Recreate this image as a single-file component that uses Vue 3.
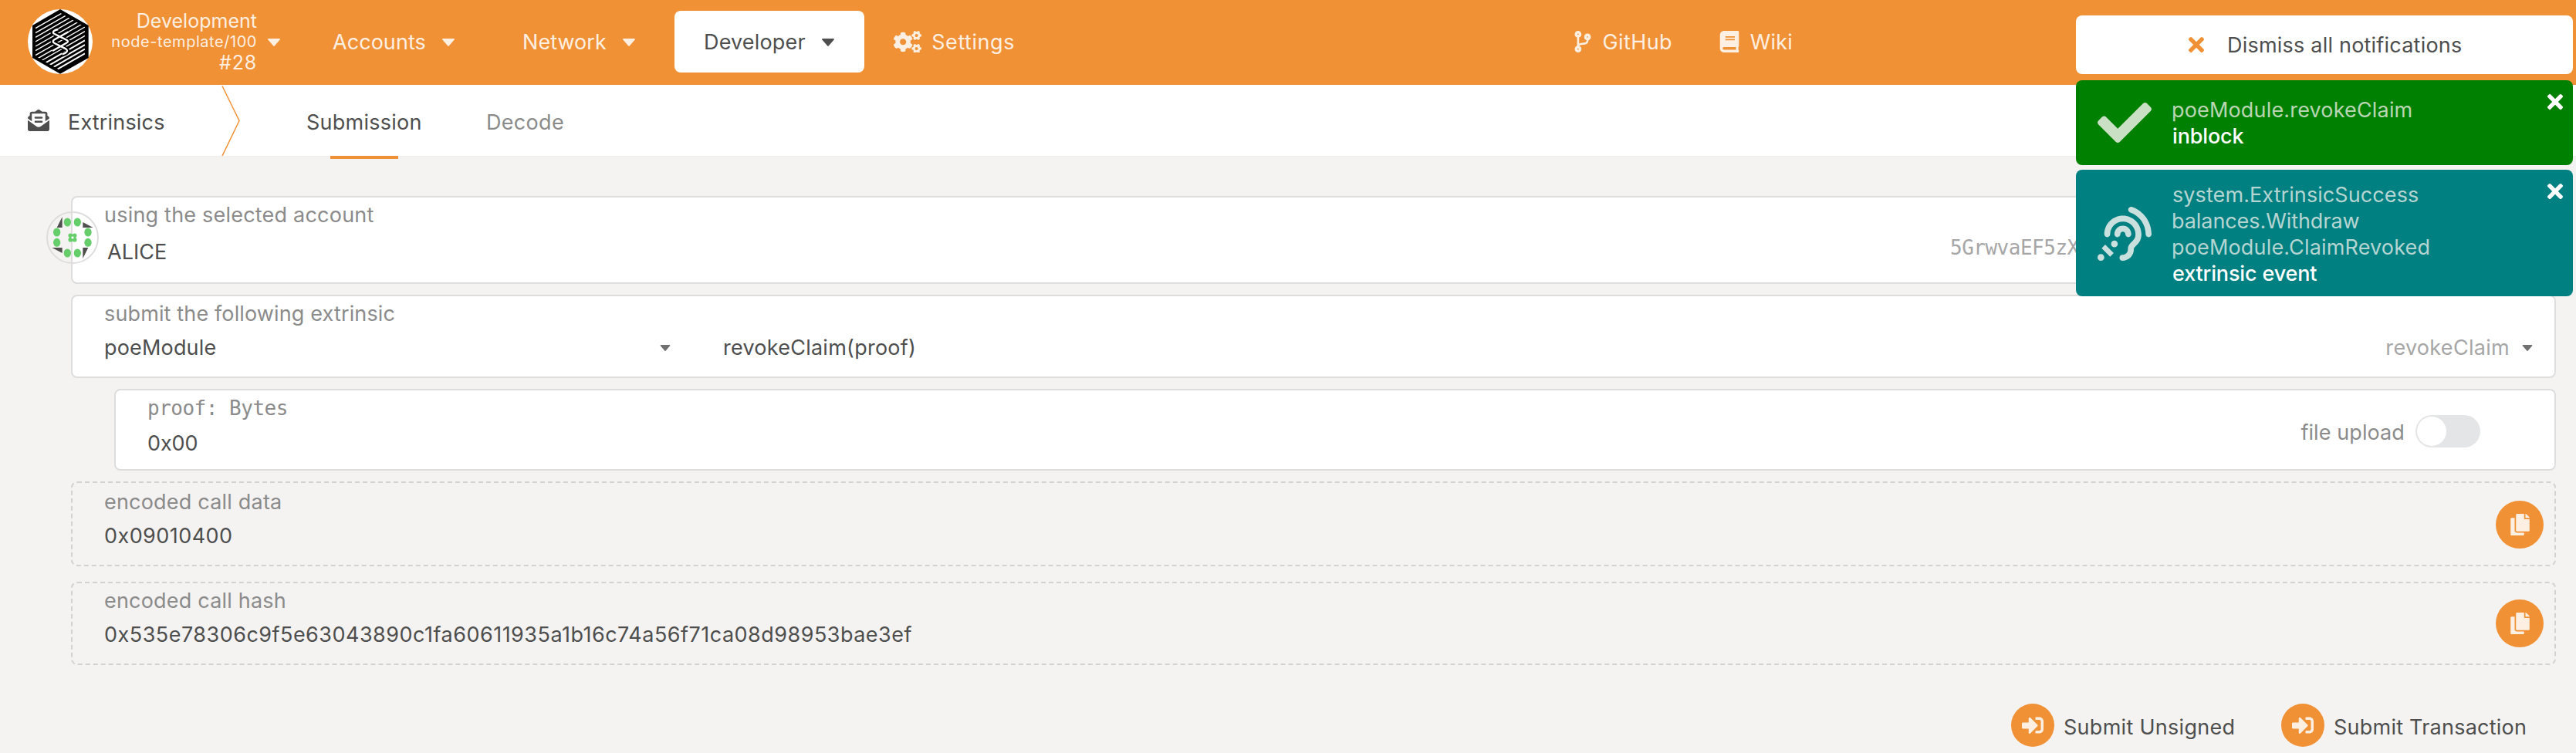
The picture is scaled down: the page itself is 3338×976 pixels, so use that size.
<script setup>
import { h } from 'vue'

const shapes = {
  cogs: ['0 0 640 512', 'M512.1 191l-8.2 14.3c-3 5.3-9.4 7.5-15.1 5.4-11.8-4.4-22.6-10.7-32.1-18.6-4.6-3.8-5.8-10.5-2.8-15.7l8.2-14.3c-6.9-8-12.3-17.3-15.9-27.4h-16.5c-6 0-11.2-4.3-12.2-10.3-2-12-2.1-24.6 0-37.1 1-6 6.2-10.4 12.2-10.4h16.5c3.6-10.1 9-19.4 15.9-27.4l-8.2-14.3c-3-5.2-1.9-11.9 2.8-15.7 9.5-7.9 20.4-14.2 32.1-18.6 5.7-2.1 12.1.1 15.1 5.4l8.2 14.3c10.5-1.9 21.2-1.9 31.7 0L552 6.3c3-5.3 9.4-7.5 15.1-5.4 11.8 4.4 22.6 10.7 32.1 18.6 4.6 3.8 5.8 10.5 2.8 15.7l-8.2 14.3c6.9 8 12.3 17.3 15.9 27.4h16.5c6 0 11.2 4.3 12.2 10.3 2 12 2.1 24.6 0 37.1-1 6-6.2 10.4-12.2 10.4h-16.5c-3.6 10.1-9 19.4-15.9 27.4l8.2 14.3c3 5.2 1.9 11.9-2.8 15.7-9.5 7.9-20.4 14.2-32.1 18.6-5.7 2.1-12.1-.1-15.1-5.4l-8.2-14.3c-10.4 1.9-21.2 1.9-31.7 0zm-10.5-58.8c38.5 29.6 82.4-14.3 52.8-52.8-38.5-29.7-82.4 14.3-52.8 52.8zM386.3 286.1l33.7 16.8c10.1 5.8 14.5 18.1 10.5 29.1-8.9 24.2-26.4 46.4-42.6 65.8-7.4 8.9-20.2 11.1-30.3 5.3l-29.1-16.8c-16 13.7-34.6 24.6-54.9 31.7v33.6c0 11.6-8.3 21.6-19.7 23.6-24.6 4.2-50.4 4.4-75.9 0-11.5-2-20-11.9-20-23.6V418c-20.3-7.2-38.9-18-54.9-31.7L74 403c-10 5.8-22.9 3.6-30.3-5.3-16.2-19.4-33.3-41.6-42.2-65.7-4-10.9.4-23.2 10.5-29.1l33.3-16.8c-3.9-20.9-3.9-42.4 0-63.4L12 205.8c-10.1-5.8-14.6-18.1-10.5-29 8.9-24.2 26-46.4 42.2-65.8 7.4-8.9 20.2-11.1 30.3-5.3l29.1 16.8c16-13.7 34.6-24.6 54.9-31.7V57.1c0-11.5 8.2-21.5 19.6-23.5 24.6-4.2 50.5-4.4 76-.1 11.5 2 20 11.9 20 23.6v33.6c20.3 7.2 38.9 18 54.9 31.7l29.1-16.8c10-5.8 22.9-3.6 30.3 5.3 16.2 19.4 33.2 41.6 42.1 65.8 4 10.9.1 23.2-10 29.1l-33.7 16.8c3.9 21 3.9 42.5 0 63.5zm-117.6 21.1c59.2-77-28.7-164.9-105.7-105.7-59.2 77 28.7 164.9 105.7 105.7zM512.1 493.1l-8.2 14.3c-3 5.3-9.4 7.5-15.1 5.4-11.8-4.4-22.6-10.7-32.1-18.6-4.6-3.8-5.8-10.5-2.8-15.7l8.2-14.3c-6.9-8-12.3-17.3-15.9-27.4h-16.5c-6 0-11.2-4.3-12.2-10.3-2-12-2.1-24.6 0-37.1 1-6 6.2-10.4 12.2-10.4h16.5c3.6-10.1 9-19.4 15.9-27.4l-8.2-14.3c-3-5.2-1.9-11.9 2.8-15.7 9.5-7.9 20.4-14.2 32.1-18.6 5.7-2.1 12.1.1 15.1 5.4l8.2 14.3c10.5-1.9 21.2-1.9 31.7 0l8.2-14.3c3-5.3 9.4-7.5 15.1-5.4 11.8 4.4 22.6 10.7 32.1 18.6 4.6 3.8 5.8 10.5 2.8 15.7l-8.2 14.3c6.9 8 12.3 17.3 15.9 27.4h16.5c6 0 11.2 4.3 12.2 10.3 2 12 2.1 24.6 0 37.1-1 6-6.2 10.4-12.2 10.4h-16.5c-3.6 10.1-9 19.4-15.9 27.4l8.2 14.3c3 5.2 1.9 11.9-2.8 15.7-9.5 7.9-20.4 14.2-32.1 18.6-5.7 2.1-12.1-.1-15.1-5.4l-8.2-14.3c-10.4 1.9-21.2 1.9-31.7 0zm-10.5-58.8c38.5 29.6 82.4-14.3 52.8-52.8-38.5-29.7-82.4 14.3-52.8 52.8z'],
  branch: ['0 0 384 512', 'M384 144c0-44.2-35.8-80-80-80s-80 35.8-80 80c0 36.4 24.3 67.1 57.5 76.8-.6 16.1-4.2 28.5-11 36.9-15.4 19.2-49.3 22.4-85.2 25.7-28.2 2.6-57.4 5.4-81.3 16.9v-144c32.5-10.2 56-40.5 56-76.3 0-44.2-35.8-80-80-80S0 35.8 0 80c0 35.8 23.5 66.1 56 76.3v199.3C23.5 365.9 0 396.2 0 432c0 44.2 35.8 80 80 80s80-35.8 80-80c0-34-21.2-63.1-51.2-74.6 3.1-5.2 7.8-9.8 14.9-13.4 16.2-8.2 40.4-10.4 66.1-12.8 42.2-3.9 90-8.4 118.2-43.4 14-17.4 21.1-39.8 21.6-67.9 31.6-10.8 54.4-40.7 54.4-75.9zM80 64c8.8 0 16 7.2 16 16s-7.2 16-16 16-16-7.2-16-16 7.2-16 16-16zm0 384c-8.8 0-16-7.2-16-16s7.2-16 16-16 16 7.2 16 16-7.2 16-16 16zm224-320c8.8 0 16 7.2 16 16s-7.2 16-16 16-16-7.2-16-16 7.2-16 16-16z'],
  book: ['0 0 448 512', 'M448 360V24c0-13.3-10.7-24-24-24H96C43 0 0 43 0 96v320c0 53 43 96 96 96h328c13.3 0 24-10.7 24-24v-16c0-7.5-3.5-14.3-8.9-18.7-4.2-15.4-4.2-59.3 0-74.7 5.4-4.3 8.9-11.1 8.9-18.6zM128 134c0-3.3 2.7-6 6-6h212c3.3 0 6 2.7 6 6v20c0 3.3-2.7 6-6 6H134c-3.3 0-6-2.7-6-6v-20zm0 64c0-3.3 2.7-6 6-6h212c3.3 0 6 2.7 6 6v20c0 3.3-2.7 6-6 6H134c-3.3 0-6-2.7-6-6v-20zm253.4 250H96c-17.7 0-32-14.3-32-32 0-17.6 14.4-32 32-32h285.4c-1.9 17.1-1.9 46.9 0 64z'],
  envelope: ['0 0 512 512', 'M176 216h160c8.84 0 16-7.16 16-16v-16c0-8.84-7.16-16-16-16H176c-8.84 0-16 7.16-16 16v16c0 8.84 7.16 16 16 16zm-16 80c0 8.84 7.16 16 16 16h160c8.84 0 16-7.16 16-16v-16c0-8.84-7.16-16-16-16H176c-8.84 0-16 7.16-16 16v16zm96 121.13c-16.42 0-32.84-5.06-46.86-15.19L0 250.86V464c0 26.51 21.49 48 48 48h416c26.51 0 48-21.49 48-48V250.86L302.86 401.94c-14.02 10.12-30.44 15.19-46.86 15.19zm237.61-254.18c-8.85-6.94-17.24-13.47-29.61-22.81V96c0-26.51-21.49-48-48-48h-77.55c-3.04-2.2-5.87-4.26-9.04-6.56C312.6 29.17 279.2-.35 256 0c-23.2-.35-56.59 29.17-73.41 41.44-3.17 2.3-6 4.36-9.04 6.56H96c-26.51 0-48 21.49-48 48v44.14c-12.37 9.33-20.76 15.87-29.61 22.81A47.995 47.995 0 0 0 0 200.72v10.65l96 69.35V96h320v184.72l96-69.35v-10.65c0-14.74-6.78-28.67-18.39-37.77z'],
  times: ['0 80 352 352', 'M242.72 256l100.07-100.07c12.28-12.28 12.28-32.19 0-44.48l-22.24-22.24c-12.28-12.28-32.19-12.28-44.48 0L176 189.28 75.93 89.21c-12.28-12.28-32.19-12.28-44.48 0L9.21 111.45c-12.28 12.28-12.28 32.19 0 44.48L109.28 256 9.21 356.07c-12.28 12.28-12.28 32.19 0 44.48l22.24 22.24c12.28 12.28 32.2 12.28 44.48 0L176 322.72l100.07 100.07c12.28 12.28 32.2 12.28 44.48 0l22.24-22.24c12.28-12.28 12.28-32.19 0-44.48L242.72 256z'],
  check: ['0 0 512 512', 'M173.898 439.404l-166.4-166.4c-9.997-9.997-9.997-26.206 0-36.204l36.203-36.204c9.997-9.998 26.207-9.998 36.204 0L192 312.69 432.095 72.596c9.997-9.997 26.207-9.997 36.204 0l36.203 36.204c9.997 9.997 9.997 26.206 0 36.204l-294.4 294.401c-9.998 9.997-26.207 9.997-36.204-.001z'],
  ear: ['0 0 512 512', 'M216 260c0 15.464-12.536 28-28 28s-28-12.536-28-28c0-44.112 35.888-80 80-80s80 35.888 80 80c0 15.464-12.536 28-28 28s-28-12.536-28-28c0-13.234-10.767-24-24-24s-24 10.766-24 24zm24-176c-97.047 0-176 78.952-176 176 0 15.464 12.536 28 28 28s28-12.536 28-28c0-66.168 53.832-120 120-120s120 53.832 120 120c0 75.164-71.009 70.311-71.997 143.622L288 404c0 28.673-23.327 52-52 52-15.464 0-28 12.536-28 28s12.536 28 28 28c59.475 0 107.876-48.328 108-107.774.595-34.428 72-48.24 72-144.226 0-97.048-78.953-176-176-176zm-80 236c-17.673 0-32 14.327-32 32s14.327 32 32 32 32-14.327 32-32-14.327-32-32-32zM32 448c-17.673 0-32 14.327-32 32s14.327 32 32 32 32-14.327 32-32-14.327-32-32-32zm480-187.993c0-1.518-.012-3.025-.045-4.531C510.076 140.525 436.157 38.47 327.994 1.511c-14.633-4.998-30.549 2.809-35.55 17.442-5 14.633 2.81 30.549 17.442 35.55 85.906 29.354 144.61 110.513 146.077 201.953l.003.188c.026 1.118.033 2.236.033 3.363 0 15.464 12.536 28 28 28s28.001-12.536 28.001-28zM152.971 439.029l-80-80L39.03 392.97l80 80 33.941-33.941z'],
  copy: ['0 0 448 512', 'M320 448v40c0 13.255-10.745 24-24 24H24c-13.255 0-24-10.745-24-24V120c0-13.255 10.745-24 24-24h72v296c0 30.879 25.121 56 56 56h168zm0-344V0H152c-13.255 0-24 10.745-24 24v368c0 13.255 10.745 24 24 24h272c13.255 0 24-10.745 24-24V128H344c-13.2 0-24-10.8-24-24zm120.971-31.029L375.029 7.029A24 24 0 0 0 358.059 0H352v96h96v-6.059a24 24 0 0 0-7.029-16.97z'],
  signIn: ['0 0 512 512', 'M416 448h-84c-6.6 0-12-5.4-12-12v-40c0-6.6 5.4-12 12-12h84c17.7 0 32-14.3 32-32V160c0-17.7-14.3-32-32-32h-84c-6.6 0-12-5.4-12-12V76c0-6.6 5.4-12 12-12h84c53 0 96 43 96 96v192c0 53-43 96-96 96zm-47-201L201 79c-15-15-41-4.5-41 17v96H24c-13.3 0-24 10.7-24 24v96c0 13.3 10.7 24 24 24h136v96c0 21.5 26 32 41 17l168-168c9.3-9.4 9.3-24.6 0-34z'],
  caret: ['0 0 16 10', 'M1 0h14a1 1 0 0 1 .7 1.6L8.7 9.6a1 1 0 0 1-1.4 0L.3 1.6A1 1 0 0 1 1 0z']
}

const Icon = (props) =>
  h('svg', { viewBox: shapes[props.name][0], fill: 'currentColor', 'aria-hidden': 'true' }, [
    h('path', { d: shapes[props.name][1] })
  ])
Icon.props = ['name']

// Parallel hatching of the chain logo, as left-edge intercepts
const hatch = [93, 110, 128, 145, 162, 180, 197, 215, 232, 249, 267, 284, 301, 318, 335]

const dots = [[142, 174], [181, 174], [222, 213], [222, 253], [181, 294], [142, 294], [101, 253], [101, 213]]
const coreDots = [[154, 226], [170, 226], [154, 242], [170, 242]]
</script>

<template>
  <div class="app">
    <header class="header">
      <svg class="logo" viewBox="48 36 252 252">
        <defs>
          <clipPath id="logo-inner"><path d="M174 50L270 105V218L174 274L78 218V105z" /></clipPath>
        </defs>
        <circle cx="174" cy="162" r="126" fill="#fff" />
        <path d="M174 36L284 99V225L174 287L66 225V99z" fill="#000" />
        <g clip-path="url(#logo-inner)">
          <path v-for="y in hatch" :key="y" :d="`M78 ${y}L270 ${y - 110}`" stroke="#fff" :stroke-width="y > 260 ? 6 : 4.2" />
          <path d="M166 112C146 116 136 124 152 131L198 155Q210 161 198 167L144 198M206 124L152 154Q140 161 152 168L196 190C212 200 196 208 182 212" fill="none" stroke="#000" stroke-width="17" />
          <path d="M166 114C148 118 140 126 152 132L198 155Q210 161 198 167L144 198M206 124L152 154Q140 161 152 168L196 190C208 199 196 206 182 211" fill="none" stroke="#fff" stroke-width="7" />
        </g>
      </svg>
      <div class="node">
        <span class="chain">Development</span>
        <span class="spec">node-template/100</span>
        <span class="block">#28</span>
      </div>
      <Icon class="caret node-caret" name="caret" />
      <div class="nav accounts"><span>Accounts</span><Icon class="caret" name="caret" /></div>
      <div class="nav network"><span>Network</span><Icon class="caret" name="caret" /></div>
      <div class="nav developer"><span>Developer</span><Icon class="caret" name="caret" /></div>
      <div class="nav settings"><Icon class="i-cogs" name="cogs" /><span>Settings</span></div>
      <div class="nav github"><Icon class="i-branch" name="branch" /><span>GitHub</span></div>
      <div class="nav wiki"><Icon class="i-book" name="book" /><span>Wiki</span></div>
    </header>

    <nav class="tabs">
      <Icon class="i-envelope" name="envelope" />
      <span class="section">Extrinsics</span>
      <svg class="chevron" viewBox="0 0 24 92"><path d="M1 1.500L23 46.500L1 92" fill="none" stroke="#f19135" stroke-width="1.500" /></svg>
      <div class="tab active"><span>Submission</span></div>
      <div class="tab decode"><span>Decode</span></div>
    </nav>

    <main class="form">
      <section class="card account">
        <svg class="identicon" viewBox="60 132 204 204">
          <circle cx="162" cy="234" r="99" fill="none" stroke="#ddd" stroke-width="6" />
          <path d="M122 153V195H101zM202 174L242 195H202zM82 273H122V294zM202 273H223L202 315z" fill="#4e4e4e" />
          <ellipse v-for="([x, y], i) in dots" :key="i" :cx="x" :cy="y" rx="14" ry="16.500" fill="#65ce6a" />
          <circle v-for="([x, y], i) in coreDots" :key="'c' + i" :cx="x" :cy="y" r="8.500" fill="#65ce6a" />
          <rect x="158" y="230" width="8" height="8" fill="#fff" />
        </svg>
        <div class="field">
          <label class="using">using the selected account</label>
          <span class="alice">ALICE</span>
        </div>
        <span class="address">5GrwvaEF5zX</span>
      </section>

      <section class="card extrinsic">
        <label class="submit-label">submit the following extrinsic</label>
        <div class="selects">
          <div class="module"><span>poeModule</span><Icon class="small-caret" name="caret" /></div>
          <span class="method">revokeClaim(proof)</span>
          <span class="short">revokeClaim</span>
          <Icon class="small-caret" name="caret" />
        </div>
      </section>

      <section class="card param">
        <div class="field">
          <label class="mono">proof: Bytes</label>
          <span class="bytes">0x00</span>
        </div>
        <span class="upload">file upload</span>
        <span class="toggle"><span class="knob"></span></span>
      </section>

      <section class="card dashed data">
        <div class="field">
          <label>encoded call data</label>
          <span class="hex">0x09010400</span>
        </div>
        <button class="copy"><Icon name="copy" /></button>
      </section>

      <section class="card dashed hash">
        <div class="field">
          <label>encoded call hash</label>
          <span class="hash-value">0x535e78306c9f5e63043890c1fa60611935a1b16c74a56f71ca08d98953bae3ef</span>
        </div>
        <button class="copy"><Icon name="copy" /></button>
      </section>

      <div class="actions">
        <span class="round"><Icon name="signIn" /></span><span class="unsigned">Submit Unsigned</span>
        <span class="round"><Icon name="signIn" /></span><span class="transaction">Submit Transaction</span>
      </div>
    </main>

    <aside class="toasts">
      <div class="dismiss"><Icon name="times" /><span>Dismiss all notifications</span></div>
      <div class="toast ok">
        <Icon class="toast-icon" name="check" />
        <div class="lines">
          <span>poeModule.revokeClaim</span>
          <strong>inblock</strong>
        </div>
        <Icon class="close" name="times" />
      </div>
      <div class="toast event">
        <Icon class="toast-icon" name="ear" />
        <div class="lines">
          <span class="success">system.ExtrinsicSuccess</span>
          <span class="withdraw">balances.Withdraw</span>
          <span>poeModule.ClaimRevoked</span>
          <strong>extrinsic event</strong>
        </div>
        <Icon class="close" name="times" />
      </div>
    </aside>
  </div>
</template>

<style>
body { background: #f4f3f1; overflow: hidden; }
</style>

<style scoped>
.app {
  position: relative;
  width: 3338px;
  height: 976px;
  overflow: hidden;
  background: #f4f3f1;
  color: #4e4e4e;
  font: 400 27px/33px Inter, "Noto Sans", sans-serif;
  letter-spacing: 0.17px;
}
.app * { box-sizing: border-box; }
.app span, .app label, .app strong { white-space: nowrap; }
svg { display: block; flex: none; }

.header {
  display: flex;
  align-items: center;
  height: 110px;
  padding: 0 0 2px 36px;
  background: #f19135;
  color: #fdefe2;
}
.logo { width: 84px; height: 84px; }
.node {
  display: flex;
  flex-direction: column;
  align-items: flex-end;
  width: 214px;
  font-size: 25px;
  line-height: 27px;
}
.node span { margin-right: 1px; }
.chain { letter-spacing: 0.014px; }
.spec { font-size: 20px; letter-spacing: 0.548px; }
.block { letter-spacing: 0.8px; }
.caret { width: 16px; height: 10px; margin-top: 2px; }
.node-caret { margin-left: 13px; }
.nav {
  display: flex;
  flex: none;
  align-items: center;
  justify-content: space-between;
  height: 80px;
}
.accounts { width: 158px; margin-left: 68px; letter-spacing: 0.05px; }
.network { width: 146px; margin-left: 88px; letter-spacing: 0.05px; }
.developer {
  width: 246px;
  margin-left: 51px;
  padding: 0 39px 0 38px;
  border-radius: 8px;
  background: #fff;
  color: #4e4e4e;
}
.settings { width: 157px; margin-left: 38px; letter-spacing: 0.55px; }
.i-cogs { width: 36px; height: 28.8px; }
.github { width: 127px; margin-left: 725px; letter-spacing: 0.39px; }
.i-branch { width: 22px; height: 28px; }
.wiki { width: 95px; margin-left: 61px; }
.i-book { width: 26px; height: 28px; }

.tabs {
  display: flex;
  align-items: flex-start;
  height: 92px;
  padding-left: 36px;
  background: #fff;
  box-shadow: 0 2px 0 #f0efee;
}
.i-envelope { width: 28px; height: 28px; margin-top: 32px; }
.section { width: 199px; margin: 32px 0 0 24px; }
.chevron { width: 24px; height: 92px; }
.tab { height: 96px; padding-top: 32px; }
.active { position: relative; width: 149px; margin-left: 86px; letter-spacing: 0.25px; }
.active::after {
  position: absolute;
  bottom: 0;
  left: 31px;
  width: 88px;
  height: 4px;
  background: #f19135;
  content: "";
}
.decode { margin-left: 84px; color: #8b8b8b; letter-spacing: 0.32px; }

.form {
  display: flex;
  flex-direction: column;
  padding: 52px 26px 0 92px;
}
.card {
  display: flex;
  position: relative;
  border: 2px solid #ddd;
  border-radius: 8px;
  background: #fff;
}
label { color: #8b8b8b; }
.field { display: flex; flex: 1; flex-direction: column; align-items: flex-start; }
.account { height: 114px; padding: 6px 0 0 40px; }
.account .field { flex: none; width: 2393px; }
.identicon { position: absolute; top: 18px; left: -34px; width: 68px; height: 68px; }
.using { margin-left: 1px; letter-spacing: 0.21px; }
.alice { margin: 15px 0 0 5px; letter-spacing: 0.03px; }
.address, .mono {
  color: #a6a6a6;
  font: 26px/30px "DejaVu Sans Mono", monospace;
  letter-spacing: -0.5px;
}
.address { margin-top: 44px; }

.extrinsic { flex-direction: column; height: 108px; margin-top: 14px; padding: 6px 28px 0 41px; }
.submit-label { letter-spacing: 0.137px; }
.selects { display: flex; align-items: center; margin-top: 11px; }
.module { display: flex; align-items: center; justify-content: space-between; width: 734px; }
.small-caret { width: 14px; height: 8px; margin-top: 1px; color: #707070; }
.method { margin-left: 68px; letter-spacing: 0.247px; }
.short { margin: 0 16px 0 auto; color: #a6a6a6; letter-spacing: 0.3px; }

.param { height: 106px; margin: 14px 0 0 56px; padding: 8px 96px 0 41px; }
.mono { color: #8b8b8b; }
.bytes { margin-top: 14px; letter-spacing: -0.1px; }
.upload { margin: 30px 14px 0 0; color: #8b8b8b; letter-spacing: 0.09px; }
.toggle {
  width: 84px;
  height: 42px;
  margin-top: 24px;
  padding: 2px;
  border-radius: 21px;
  background: #e4e5e7;
}
.knob { display: block; width: 38px; height: 38px; border-radius: 50%; background: #fff; }

.dashed { border: 2px dashed #d3d2d1; background: transparent; letter-spacing: 0.2px; padding: 8px 14px 0 41px; }
.data { height: 110px; margin-top: 14px; }
.hash { height: 108px; margin-top: 20px; padding-top: 6px; }
.hex { margin-top: 11px; letter-spacing: 0.436px; }
.hash-value { margin-top: 11px; letter-spacing: 0.483px; }
.copy {
  display: flex;
  align-items: center;
  justify-content: center;
  width: 62px;
  height: 62px;
  margin-top: 15px;
  padding: 0;
  border: 0;
  border-radius: 50%;
  background: #f19135;
  color: #fdefe2;
}
.copy svg { width: 25px; height: 28px; }

.actions { display: flex; align-items: center; height: 56px; margin-top: 50px; padding-left: 2514px; }
.round {
  display: flex;
  flex: none;
  align-items: center;
  justify-content: center;
  width: 56px;
  height: 56px;
  border-radius: 50%;
  background: #f19135;
  color: #fdefe2;
}
.round svg { width: 28px; height: 28px; }
.unsigned { width: 282px; margin: 4px 0 0 12px; letter-spacing: 0.284px; }
.transaction { margin: 4px 0 0 12px; letter-spacing: 0.234px; }

.toasts { position: absolute; top: 20px; right: 4px; width: 644px; }
.dismiss, .toast { display: flex; border-radius: 8px; }
.dismiss { align-items: center; height: 76px; padding-left: 146px; background: #fff; letter-spacing: 0.216px; }
.dismiss svg { width: 20px; height: 20px; margin-right: 30px; color: #f19135; }
.toast { position: relative; padding-left: 28px; color: #fff; }
.ok { height: 110px; margin-top: 8px; background: #008000; }
.event { height: 164px; margin-top: 6px; background: #008080; }
.toast-icon { width: 70px; height: 70px; }
.ok .toast-icon { margin-top: 20px; color: #cae0c5; }
.event .toast-icon { margin-top: 48px; color: #cae0de; }
.lines { display: flex; flex-direction: column; margin: 22px 0 0 26px; line-height: 34px; letter-spacing: 0.165px; }
.event .lines { margin-top: 16px; }
.ok .lines span { color: #b8d6b2; }
.event .lines span { color: #b5d5d3; }
.lines strong { margin-left: 1px; font-weight: 500; letter-spacing: -0.15px; }
.lines .success { margin-left: 1px; letter-spacing: 0.083px; }
.lines .withdraw { letter-spacing: -0.069px; }
.close { position: absolute; top: 18px; right: 13px; width: 20px; height: 20px; }
</style>
